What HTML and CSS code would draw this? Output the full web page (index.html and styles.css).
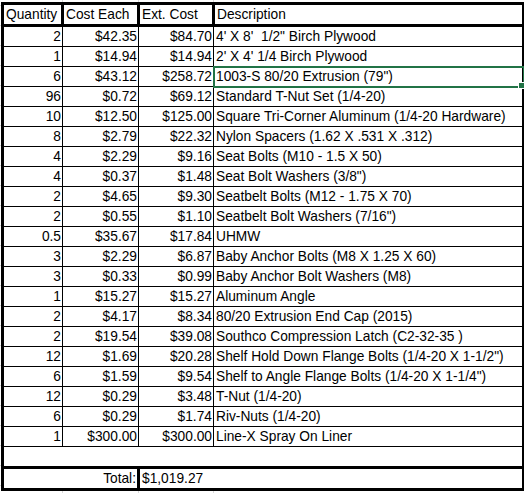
FILE: index.html
```html
<!DOCTYPE html>
<html lang="en">
<head>
  <meta charset="UTF-8">
  <title>Parts list</title>
  <link rel="stylesheet" href="styles.css">
</head>
<body>
  <table class="sheet">
    <colgroup>
      <col class="c-qty">
      <col class="c-each">
      <col class="c-ext">
      <col class="c-desc">
    </colgroup>
    <thead>
      <tr class="head">
        <th>Quantity</th>
        <th>Cost Each</th>
        <th>Ext. Cost</th>
        <th>Description</th>
      </tr>
    </thead>
    <tbody>
      <tr><td class="num">2</td><td class="num">$42.35</td><td class="num">$84.70</td><td>4' X 8'&nbsp; 1/2" Birch Plywood</td></tr>
      <tr><td class="num">1</td><td class="num">$14.94</td><td class="num">$14.94</td><td>2' X 4' 1/4 Birch Plywood</td></tr>
      <tr><td class="num">6</td><td class="num">$43.12</td><td class="num">$258.72</td><td class="selected">1003-S 80/20 Extrusion (79")<span class="handle"></span></td></tr>
      <tr><td class="num">96</td><td class="num">$0.72</td><td class="num">$69.12</td><td>Standard T-Nut Set (1/4-20)</td></tr>
      <tr><td class="num">10</td><td class="num">$12.50</td><td class="num">$125.00</td><td>Square Tri-Corner Aluminum (1/4-20 Hardware)</td></tr>
      <tr><td class="num">8</td><td class="num">$2.79</td><td class="num">$22.32</td><td>Nylon Spacers (1.62 X .531 X .312)</td></tr>
      <tr><td class="num">4</td><td class="num">$2.29</td><td class="num">$9.16</td><td>Seat Bolts (M10 - 1.5 X 50)</td></tr>
      <tr><td class="num">4</td><td class="num">$0.37</td><td class="num">$1.48</td><td>Seat Bolt Washers (3/8")</td></tr>
      <tr><td class="num">2</td><td class="num">$4.65</td><td class="num">$9.30</td><td>Seatbelt Bolts (M12 - 1.75 X 70)</td></tr>
      <tr><td class="num">2</td><td class="num">$0.55</td><td class="num">$1.10</td><td>Seatbelt Bolt Washers (7/16")</td></tr>
      <tr><td class="num">0.5</td><td class="num">$35.67</td><td class="num">$17.84</td><td>UHMW</td></tr>
      <tr><td class="num">3</td><td class="num">$2.29</td><td class="num">$6.87</td><td>Baby Anchor Bolts (M8 X 1.25 X 60)</td></tr>
      <tr><td class="num">3</td><td class="num">$0.33</td><td class="num">$0.99</td><td>Baby Anchor Bolt Washers (M8)</td></tr>
      <tr><td class="num">1</td><td class="num">$15.27</td><td class="num">$15.27</td><td>Aluminum Angle</td></tr>
      <tr><td class="num">2</td><td class="num">$4.17</td><td class="num">$8.34</td><td>80/20 Extrusion End Cap (2015)</td></tr>
      <tr><td class="num">2</td><td class="num">$19.54</td><td class="num">$39.08</td><td>Southco Compression Latch (C2-32-35 )</td></tr>
      <tr><td class="num">12</td><td class="num">$1.69</td><td class="num">$20.28</td><td>Shelf Hold Down Flange Bolts (1/4-20 X 1-1/2")</td></tr>
      <tr><td class="num">6</td><td class="num">$1.59</td><td class="num">$9.54</td><td>Shelf to Angle Flange Bolts (1/4-20 X 1-1/4")</td></tr>
      <tr><td class="num">12</td><td class="num">$0.29</td><td class="num">$3.48</td><td>T-Nut (1/4-20)</td></tr>
      <tr><td class="num">6</td><td class="num">$0.29</td><td class="num">$1.74</td><td>Riv-Nuts (1/4-20)</td></tr>
      <tr><td class="num">1</td><td class="num">$300.00</td><td class="num">$300.00</td><td>Line-X Spray On Liner</td></tr>
      <tr class="blank"><td colspan="4"></td></tr>
      <tr class="total"><td colspan="2" class="num">Total:</td><td colspan="2">$1,019.27</td></tr>
    </tbody>
  </table>
</body>
</html>
```

FILE: styles.css
```css
html {
  background-color: #fff;
  /* excel gridlines around the table */
  background-image:
    linear-gradient(90deg, transparent 62px, #d9d9d9 62px, #d9d9d9 63px, transparent 63px,
      transparent 138px, #d9d9d9 138px, #d9d9d9 139px, transparent 139px,
      transparent 213px, #d9d9d9 213px, #d9d9d9 214px, transparent 214px),
    repeating-linear-gradient(180deg, transparent 0, transparent 5px, #d9d9d9 5px, #d9d9d9 6px, transparent 6px, transparent 20px);
}

body {
  margin: 0;
  padding: 2px 0 0 1px;
  font-family: "Liberation Sans", Arial, sans-serif;
  font-size: 13.75px;
  color: #000;
}

.sheet {
  border-collapse: collapse;
  border: 3px solid #000;
  background-color: #fff;
  table-layout: fixed;
  width: 521px;
}

.c-qty { width: 60px; }
.c-each { width: 76px; }
.c-ext { width: 75px; }
.c-desc { width: 310px; }

th, td {
  height: 18px;
  padding: 1px 2px 0;
  line-height: 18px;
  white-space: nowrap;
  overflow: visible;
  text-align: left;
  font-weight: normal;
  vertical-align: bottom;
  border: 1px solid #000;
}

.head th {
  border: 3px solid #000;
  height: 17px;
}

.num {
  text-align: right;
  padding-right: 1px;
}

.selected {
  position: relative;
  outline: 2px solid #217346;
  outline-offset: -1px;
}

.handle {
  position: absolute;
  right: -3px;
  bottom: -3px;
  width: 5px;
  height: 5px;
  background-color: #217346;
  border: 1px solid #fff;
}

.blank td {
  border-left: none;
  border-right: none;
}

.total td {
  border: 3px solid #000;
  height: 17px;
}
```
